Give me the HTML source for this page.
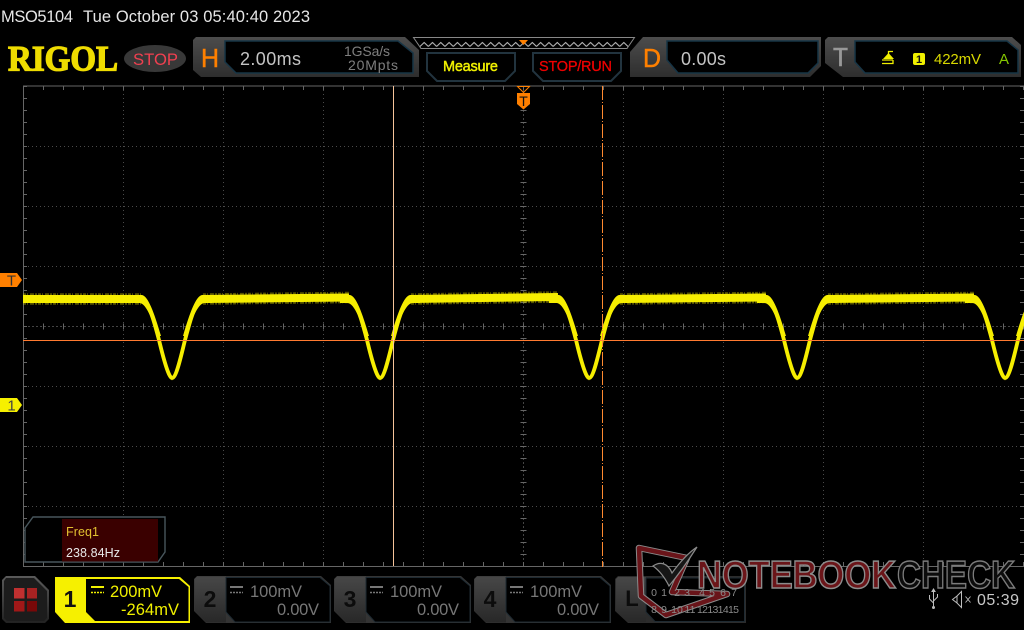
<!DOCTYPE html>
<html><head><meta charset="utf-8"><title>MSO5104</title>
<style>
html,body{margin:0;padding:0;background:#000;width:1024px;height:630px;overflow:hidden}
svg{display:block;position:absolute;left:0;top:0}
text{font-family:"Liberation Sans",sans-serif}
</style></head><body>
<svg width="1024" height="630" viewBox="0 0 1024 630" xmlns="http://www.w3.org/2000/svg">
<defs>
<linearGradient id="pan" x1="0" y1="0" x2="0" y2="1"><stop offset="0" stop-color="#4c4c4c"/><stop offset="1" stop-color="#2e2e2e"/></linearGradient>
<linearGradient id="ch" x1="0" y1="0" x2="0" y2="1"><stop offset="0" stop-color="#474747"/><stop offset="1" stop-color="#282828"/></linearGradient>
<linearGradient id="menu" x1="0" y1="0" x2="0" y2="1"><stop offset="0" stop-color="#5a5a5a"/><stop offset="1" stop-color="#222"/></linearGradient>
<pattern id="zig" x="420" y="41" width="8.32" height="7" patternUnits="userSpaceOnUse"><path d="M0 5.500L4.160 1.500L8.320 5.500" fill="none" stroke="#bbb" stroke-width="1"/></pattern>
<g id="dip">
<path d="M-26 302C-21 310-17 325-13 340C-8 361-3 378 0 378C4 378 8 361 13 340C17 325 21 310 26 302" fill="none" stroke="#f6ee00" stroke-width="3.800"/>
<path d="M-40 295L-30 295C-24 296-18 312-11 336L-15 336C-20 318-26 304-32 303L-40 303Z" fill="#f6ee00"/>
<path d="M40 295L30 295C24 296 18 312 11 336L15 336C20 318 26 304 32 303L40 303Z" fill="#f6ee00"/>
<path d="M0 380.500l-2-4h4z" fill="#f6ee00"/>
</g>
<g id="chan">
<polygon points="3,0 127,0 137,9 137,47 12,47 0,35 0,3" fill="#343434"/>
<polygon points="3,0.500 32,0.500 32,46.500 12,46.500 0.500,35 0.500,3" fill="url(#ch)"/>
<polygon points="32,1.500 126,1.500 136,10 136,46 41,46 32,36" fill="#000" stroke="#1e2a32" stroke-width="1"/>
<rect x="36" y="10" width="13" height="2" fill="#777"/>
<path d="M36 16.500h13" stroke="#777" stroke-width="1.400" stroke-dasharray="2 1"/>
</g>
</defs>

<!-- grid -->
<g shape-rendering="crispEdges" fill="none">
<g stroke="#4a4a4a" stroke-dasharray="1 3">
<path d="M123.500 86V566M223.500 86V566M323.500 86V566M423.500 86V566M623.500 86V566M723.500 86V566M823.500 86V566M923.500 86V566"/>
<path d="M24 146.500H1024M24 206.500H1024M24 266.500H1024M24 386.500H1024M24 446.500H1024M24 506.500H1024"/>
</g>
<path d="M24 326.500H1024M523.500 86V566" stroke="#444" stroke-dasharray="2 2"/>
<path d="M23 88H1024" stroke="#666" stroke-width="4" stroke-dasharray="1 19"/>
<path d="M23 564H1024" stroke="#666" stroke-width="4" stroke-dasharray="1 19"/>
<path d="M25 86V566" stroke="#666" stroke-width="4" stroke-dasharray="1 11"/>
<path d="M1022 86V566" stroke="#666" stroke-width="4" stroke-dasharray="1 11"/>
<path d="M23 326.500H1024" stroke="#666" stroke-width="6" stroke-dasharray="1 19"/>
<path d="M523.500 86V566" stroke="#666" stroke-width="6" stroke-dasharray="1 11"/>
<path d="M23.500 566V86H1024M23 566.500H1024" stroke="#666"/>
</g>

<!-- trace -->
<g>
<use href="#dip" x="172"/><use href="#dip" x="380"/><use href="#dip" x="589"/><use href="#dip" x="797"/><use href="#dip" x="1005"/>
<g fill="none" stroke="#f6ee00">
<path d="M23 299H141M203 299L349 297.500M411 299L558 297M620 299L766 297.500M828 299L974 297.500" stroke-width="8"/>
<path d="M23 299H141M203 299L349 297.500M411 299L558 297M620 299L766 297.500M828 299L974 297.500" stroke-width="11.500" opacity=".35" stroke-dasharray="3 1 1 2 4 1 2 1"/>
</g>
</g>

<!-- cursors -->
<g shape-rendering="crispEdges" fill="none">
<path d="M23 340.500H1024" stroke="#ff7a30"/>
<path d="M393.500 86V566" stroke="#f6c49a"/>
<path d="M602.500 86V567" stroke="#ff8a30" stroke-dasharray="14 2 1 2"/>
</g>

<!-- header text -->
<text x="1" y="22" font-size="16.500" fill="#e6e6e6" textLength="72">MSO5104</text>
<text x="83" y="22" font-size="16.500" fill="#e6e6e6" textLength="227">Tue October 03 05:40:40 2023</text>

<!-- logo -->
<text x="8" y="70.500" font-size="36" font-weight="bold" fill="#efdc00" stroke="#efdc00" stroke-width="1.300" style="font-family:'Liberation Serif',serif" textLength="110" lengthAdjust="spacingAndGlyphs">RIGOL</text>
<ellipse cx="155" cy="58.500" rx="31" ry="13.500" fill="#383838"/>
<text x="133" y="65" font-size="17" fill="#f04050" textLength="45" lengthAdjust="spacingAndGlyphs">STOP</text>

<!-- H panel -->
<polygon points="196,37 405,37 419,50 419,77 201,77 193,70 193,40" fill="url(#pan)"/>
<polygon points="225,41 398,41 413,53 413,73 236,73 225,62" fill="#000" stroke="#173546" stroke-width="1.500"/>
<text x="201" y="67" font-size="26" fill="#ff8000" stroke="#ff8000" stroke-width=".5" textLength="18" lengthAdjust="spacingAndGlyphs">H</text>
<text x="240" y="65" font-size="18" fill="#c4c4c4" textLength="61">2.00ms</text>
<text x="344" y="56" font-size="14" fill="#7e7e7e" textLength="46">1GSa/s</text>
<text x="348" y="70" font-size="14" fill="#7e7e7e" textLength="50">20Mpts</text>

<!-- timeline -->
<polygon points="413.500,37.500 634.500,37.500 627,48.500 421,48.500" fill="#000" stroke="#888" stroke-width="1"/>
<rect x="420" y="41" width="208" height="7" fill="url(#zig)"/>
<polygon points="519,40 528,40 523.500,45" fill="#ff8000"/>

<!-- buttons -->
<polygon points="427,53 515,53 515,71 505,81 437,81 427,71" fill="#000" stroke="#22343f" stroke-width="2"/>
<text x="443" y="71" font-size="14.500" fill="#f0f000" stroke="#f0f000" stroke-width=".45" textLength="55">Measure</text>
<polygon points="533,53 621,53 621,71 611,81 543,81 533,71" fill="#000" stroke="#22343f" stroke-width="2"/>
<text x="539" y="71" font-size="14.500" fill="#f00000" stroke="#f00000" stroke-width=".3" textLength="73">STOP/RUN</text>

<!-- D panel -->
<polygon points="643,37 821,37 821,66 810,77 630,77 630,52" fill="url(#pan)"/>
<polygon points="667,41 818,41 818,63 808,73 678,73 667,60" fill="#000" stroke="#173546" stroke-width="1.500"/>
<text x="643" y="67" font-size="26" fill="#ff8000" stroke="#ff8000" stroke-width=".5" textLength="18" lengthAdjust="spacingAndGlyphs">D</text>
<text x="681" y="65" font-size="18" fill="#c4c4c4" textLength="45">0.00s</text>

<!-- T panel -->
<polygon points="828,37 1012,37 1021,45 1021,77 843,77 825,63 825,40" fill="url(#pan)"/>
<polygon points="855,41 1007,41 1018,50 1018,73 865,73 855,62" fill="#000" stroke="#173546" stroke-width="1.500"/>
<text x="833" y="66" font-size="26" fill="#999" stroke="#999" stroke-width=".5" textLength="15" lengthAdjust="spacingAndGlyphs">T</text>
<path d="M893 51.500H888.500V55" fill="none" stroke="#f0f000" stroke-width="1.300"/>
<polygon points="888.500,53 894,59 883,59" fill="#f0f000"/>
<path d="M882 60H893M893 60V63.500H882" fill="none" stroke="#f0f000" stroke-width="1.300"/>
<rect x="913" y="53" width="12" height="12" rx="2" fill="#f0f000"/>
<text x="919" y="63" font-size="11" font-weight="bold" fill="#111" text-anchor="middle">1</text>
<text x="934" y="64" font-size="15" fill="#d8d800" textLength="47">422mV</text>
<text x="999" y="64" font-size="15" fill="#86c800">A</text>

<!-- trigger markers -->
<polygon points="517.500,86.500 529.500,86.500 523.500,92.500" fill="none" stroke="#ff8000"/>
<polygon points="517,93 530,93 530,104 523.500,109.500 517,104" fill="#ff8000"/>
<text x="523.500" y="106" font-size="14" fill="#111" text-anchor="middle">T</text>
<polygon points="0,273 17,273 22,280 17,287 0,287" fill="#ff8000"/>
<text x="11.500" y="285.500" font-size="15" fill="#333" text-anchor="middle">T</text>
<polygon points="0,398 17,398 22,405 17,412 0,412" fill="#f6f000"/>
<text x="11.500" y="410.500" font-size="15" fill="#444" text-anchor="middle">1</text>

<!-- freq box -->
<polygon points="33,517 165,517 165,552 158,562 25,562 25,528" fill="#000" stroke="#48565c" stroke-width="1.400"/>
<rect x="62" y="519" width="96" height="42.500" fill="#3a0000"/>
<text x="66" y="536" font-size="12.500" fill="#e2c030" textLength="33">Freq1</text>
<text x="66" y="557" font-size="12.500" fill="#e8e8e8" textLength="54">238.84Hz</text>

<!-- menu button -->
<polygon points="6,576 35,576 49,590 49,619 45,623 6,623 2,619 2,580" fill="url(#menu)"/>
<polygon points="6,578 34,578 47,591 47,618 44,621 7,621 4,618 4,581" fill="#1c1c1c"/>
<rect x="14" y="588" width="10.500" height="10.500" fill="#c03030"/>
<rect x="27" y="588" width="10" height="10.500" fill="#a82222"/>
<rect x="14" y="601" width="10.500" height="10.500" fill="#a01818"/>
<rect x="27" y="601" width="10" height="10.500" fill="#780808"/>

<!-- channel 1 -->
<polygon points="55,577 180,577 190,586 190,623 65,623 55,612" fill="#f6f000"/>
<polygon points="86,579 179,579 188.500,587 188.500,621 95,621 86,612" fill="#000"/>
<text x="70" y="607" font-size="23" font-weight="bold" fill="#111" text-anchor="middle">1</text>
<rect x="91" y="586" width="13" height="2" fill="#f0f000"/>
<path d="M91 592.500h13" stroke="#f0f000" stroke-width="1.400" stroke-dasharray="2 1"/>
<text x="110" y="597" font-size="16.500" fill="#f0f000" textLength="52">200mV</text>
<text x="121" y="615" font-size="16.500" fill="#f0f000" textLength="58">-264mV</text>

<!-- channel 2-4 -->
<use href="#chan" x="194" y="576"/>
<text x="210" y="607" font-size="23" font-weight="bold" fill="#0c0c0c" text-anchor="middle">2</text>
<text x="250" y="597" font-size="16.500" fill="#777" textLength="52">100mV</text>
<text x="277" y="615" font-size="16.500" fill="#777" textLength="42">0.00V</text>

<use href="#chan" x="334" y="576"/>
<text x="350" y="607" font-size="23" font-weight="bold" fill="#0c0c0c" text-anchor="middle">3</text>
<text x="390" y="597" font-size="16.500" fill="#777" textLength="52">100mV</text>
<text x="417" y="615" font-size="16.500" fill="#777" textLength="42">0.00V</text>

<use href="#chan" x="474" y="576"/>
<text x="490" y="607" font-size="23" font-weight="bold" fill="#0c0c0c" text-anchor="middle">4</text>
<text x="530" y="597" font-size="16.500" fill="#777" textLength="52">100mV</text>
<text x="557" y="615" font-size="16.500" fill="#777" textLength="42">0.00V</text>

<!-- L panel -->
<polygon points="618,576 745,576 746,578 746,623 628,623 615,611 615,579" fill="#2c2c2c"/>
<polygon points="618,577 646,577 646,622 628,622 616,611 616,579" fill="url(#ch)"/>
<polygon points="646,578 744.500,578 744.500,621.500 655,621.500 646,612" fill="#000" stroke="#1e2a32"/>
<text x="632" y="606" font-size="22" font-weight="bold" fill="#0c0c0c" text-anchor="middle">L</text>

<!-- watermark -->
<g>
<polygon points="639,548 687,558 672,592 727,594 666,615 641,596" fill="none" stroke="#8a8a8a" stroke-width="6.500" stroke-linejoin="round"/>
<polygon points="639,548 687,558 672,592 727,594 666,615 641,596" fill="none" stroke="#691419" stroke-width="4.500" stroke-linejoin="round"/>
<path d="M653 566C660 561 668 563 672 573C680 562 688 553 697 547C690 558 679 574 669 586C665 578 660 571 653 566Z" fill="#161616" stroke="#8a8a8a" stroke-width="1.200"/>
<text x="697" y="588" font-size="39" font-weight="bold" fill="#6b1519" stroke="#8c8c8c" stroke-width="1.500" textLength="199" lengthAdjust="spacingAndGlyphs">NOTEBOOK</text>
<text x="897" y="588" font-size="39" font-weight="bold" fill="#0c0c0c" stroke="#7c7c7c" stroke-width="1.500" textLength="118" lengthAdjust="spacingAndGlyphs">CHECK</text>
</g>

<!-- L digits over watermark -->
<g font-size="10.500" fill="#8a8a8a" text-anchor="middle">
<text x="654" y="596">0</text><text x="664" y="596">1</text><text x="677" y="596">2</text><text x="687" y="596">3</text><text x="702" y="596">4</text><text x="712" y="596">5</text><text x="723" y="596">6</text><text x="734" y="596">7</text>
<text x="654" y="613">8</text><text x="664" y="613">9</text><text x="677" y="613">10</text><text x="690" y="613">11</text>
</g>
<text x="697" y="613" font-size="10.500" fill="#8a8a8a" textLength="42">12131415</text>

<!-- status -->
<g fill="none" stroke="#bdbdbd" stroke-width="1">
<path d="M933.500 590V607M929.500 595V599L933.500 603M937.500 594V597L933.500 601"/>
<circle cx="933.500" cy="607.500" r="1" fill="#bdbdbd"/>
<path d="M933.500 589l-1.500 2.500h3z" fill="#bdbdbd"/>
<path d="M952.500 599.500L957 596L961.500 591.500V607.500L957 603Z"/>
<path d="M957 596V603"/>
<path d="M965.500 596.500L970.500 602.500M970.500 596.500L965.500 602.500" stroke-width=".9"/>
</g>
<text x="977" y="605" font-size="16" fill="#c8c8c8" textLength="42">05:39</text>
</svg>
</body></html>
